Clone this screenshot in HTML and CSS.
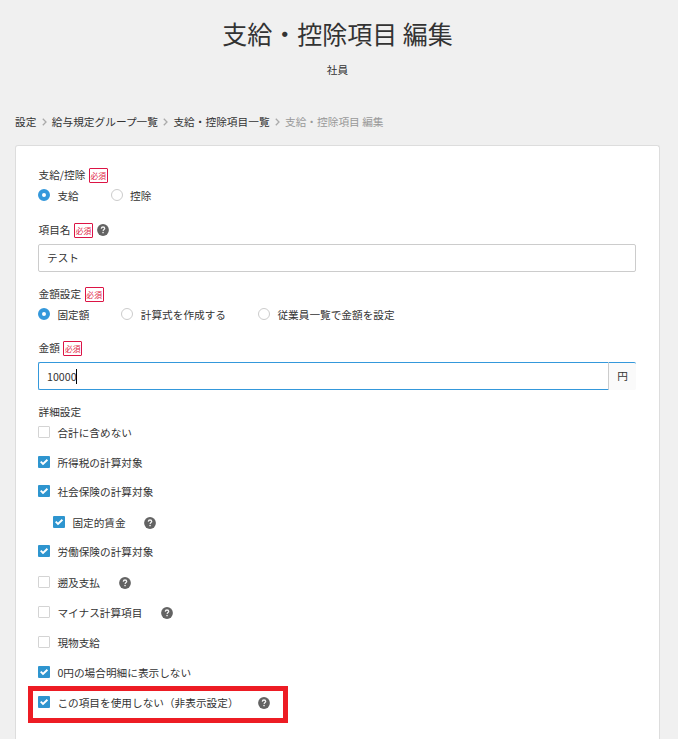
FILE: index.html
```html
<!DOCTYPE html>
<html lang="ja">
<head>
<meta charset="utf-8">
<title>支給・控除項目 編集</title>
<link rel="stylesheet" href="styles.css">
</head>
<body>
<svg width="0" height="0" class="defs">
  <symbol id="help" viewBox="0 0 12 12">
    <circle cx="6" cy="6" r="5.9" fill="#636363"/>
    <path d="M4.3 4.6C4.400 3.500 5.100 3 6 3c1 0 1.700.5 1.700 1.400C7.700 5.500 6.200 5.500 6.100 6.900" fill="none" stroke="#f4f4f4" stroke-width="1.300"/>
    <circle cx="6.050" cy="8.600" r=".8" fill="#f4f4f4"/>
  </symbol>
  <symbol id="check" viewBox="0 0 12 12">
    <path d="M2.700 5.700l2.300 2.300 4.400-4.300" fill="none" stroke="#fff" stroke-width="1.900"/>
  </symbol>
  <symbol id="chevron" viewBox="0 0 5 8">
    <path d="M.8.7L4 4 .8 7.300" fill="none" stroke="#aaa" stroke-width="1.300"/>
  </symbol>
</svg>
<header>
  <h1>支給・控除項目 編集</h1>
  <p class="subtitle">社員</p>
</header>
<nav class="breadcrumb">
  <span>設定</span><svg><use href="#chevron"/></svg>
  <span>給与規定グループ一覧</span><svg><use href="#chevron"/></svg>
  <span>支給・控除項目一覧</span><svg><use href="#chevron"/></svg>
  <span class="current">支給・控除項目 編集</span>
</nav>
<main class="card">
  <section class="field">
    <div class="label"><span class="caption">支給/控除</span><span class="required">必須</span></div>
    <div class="radios">
      <label class="option"><i class="radio on"></i><span>支給</span></label>
      <label class="option"><i class="radio"></i><span>控除</span></label>
    </div>
  </section>
  <section class="field name-field">
    <div class="label"><span class="caption">項目名</span><span class="required">必須</span><svg class="help"><use href="#help"/></svg></div>
    <div class="input"><span>テスト</span></div>
  </section>
  <section class="field type-field">
    <div class="label"><span class="caption">金額設定</span><span class="required">必須</span></div>
    <div class="radios">
      <label class="option"><i class="radio on"></i><span>固定額</span></label>
      <label class="option"><i class="radio"></i><span>計算式を作成する</span></label>
      <label class="option"><i class="radio"></i><span>従業員一覧で金額を設定</span></label>
    </div>
  </section>
  <section class="field amount-field">
    <div class="label"><span class="caption">金額</span><span class="required">必須</span></div>
    <div class="input-group">
      <div class="input focused"><span>10000</span><i class="caret"></i></div>
      <div class="unit"><span>円</span></div>
    </div>
  </section>
  <section class="field">
    <div class="label detail-label"><span>詳細設定</span></div>
    <div class="checks">
      <label class="option"><i class="box"></i><span>合計に含めない</span></label>
      <label class="option"><svg class="box on"><use href="#check"/></svg><span>所得税の計算対象</span></label>
      <label class="option"><svg class="box on"><use href="#check"/></svg><span>社会保険の計算対象</span></label>
      <label class="option nested"><svg class="box on"><use href="#check"/></svg><span>固定的賃金</span><svg class="help"><use href="#help"/></svg></label>
      <label class="option"><svg class="box on"><use href="#check"/></svg><span>労働保険の計算対象</span></label>
      <label class="option"><i class="box"></i><span>遡及支払</span><svg class="help"><use href="#help"/></svg></label>
      <label class="option"><i class="box"></i><span>マイナス計算項目</span><svg class="help"><use href="#help"/></svg></label>
      <label class="option"><i class="box"></i><span>現物支給</span></label>
      <label class="option"><svg class="box on"><use href="#check"/></svg><span>0円の場合明細に表示しない</span></label>
      <label class="option marked"><svg class="box on"><use href="#check"/></svg><span>この項目を使用しない（非表示設定）</span><svg class="help"><use href="#help"/></svg></label>
    </div>
  </section>
</main>
</body>
</html>
```
FILE: styles.css
```css
*, *::after { box-sizing: border-box; }
body {
  margin: 0;
  height: 739px;
  overflow: hidden;
  display: flex;
  flex-direction: column;
  background: #f0f0f0;
  color: #333;
  font: 10.67px/16px "Noto Sans CJK JP", sans-serif;
  white-space: nowrap;
}
svg { display: block; flex: none; }
.defs { display: none; }
header { flex: none; height: 112px; text-align: center; padding: 13px 3px 0 0; }
h1 { margin: 0; font-size: 25px; font-weight: 400; line-height: 40px; }
.subtitle { margin: 9px 0 0; }
.breadcrumb {
  flex: none;
  display: flex;
  align-items: center;
  height: 20px;
  padding-left: 15px;
  font-size: 10.7px;
}
.breadcrumb svg { width: 5px; height: 8px; margin: 0 5.2px; }
.breadcrumb .current { color: #999; }
.card {
  flex: 1;
  margin: 13px 18px 0 15px;
  padding: 19px 23px 0 22px;
  background: #fff;
  border: 1px solid #ddd;
  border-bottom: 0;
  border-radius: 3px 3px 0 0;
}
.label { display: flex; align-items: center; height: 21px; padding-left: .5px; }
.caption { margin-bottom: 1px; }
.required {
  width: 19px;
  height: 15px;
  margin-left: 3.5px;
  border: 1px solid #dc1445;
  border-radius: 1px;
  color: #e02545;
  font-size: 7.8px;
  line-height: 13px;
  text-align: center;
}
.help { width: 12px; height: 12px; }
.label .help { margin: 0 0 1px 4px; }
.radios { display: flex; gap: 32px; height: 18px; }
.option { display: flex; align-items: center; }
.option > span { margin: 1px 0 0 7.400px; }
.radio {
  width: 12px;
  height: 12px;
  border: 1px solid #ccc;
  border-radius: 50%;
  background: #fff;
}
.radio.on { border: 4px solid #3498db; }
.name-field { margin-top: 16px; }
.input {
  display: flex;
  align-items: center;
  height: 28px;
  padding-left: 8px;
  border: 1px solid #ccc;
  border-radius: 2px;
}
.name-field .input { margin-top: 3px; }
.type-field { margin-top: 12px; }
.amount-field { margin-top: 15px; }
.input-group { display: flex; margin-top: 3px; }
.focused { flex: 1; border-color: #3498db; border-radius: 2px 0 0 2px; border-right-color: #ccc; }
.focused span { margin-top: 2px; }
.caret { width: 1px; height: 15px; margin-left: -1px; background: #000; }
.unit {
  width: 27px;
  height: 28px;
  display: flex;
  align-items: center;
  justify-content: center;
  background: #fafafa;
  border-top: 1px solid #3498db;
  border-radius: 0 2px 2px 0;
}
.unit span { margin-bottom: 1px; }
.detail-label { margin-top: 12px; height: 20px; }
.checks { display: grid; grid-template-rows: 30px 29px 31px 29px 31px repeat(5, 30px); margin-top: -5px; }
.checks .option { height: 30px; }
.box { width: 12px; height: 12px; border: 1px solid #d4d4d4; border-radius: 1px; background: #fff; }
.box.on { border: 0; background: #2e95cf; }
.nested { margin-left: 15px; }
.checks .help { margin: 1px 0 0 18.800px; }
.marked { position: relative; }
.checks .marked .help { margin-left: 19.500px; }
.marked::after {
  content: "";
  position: absolute;
  left: -10px;
  top: -1px;
  width: 260px;
  height: 37px;
  border: 5px solid #ed1c24;
}
```
